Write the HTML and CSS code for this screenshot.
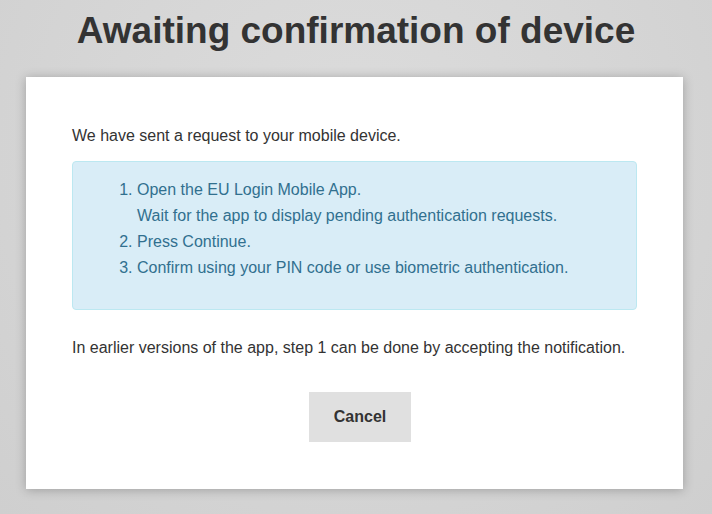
FILE: index.html
```html
<!DOCTYPE html>
<html lang="en">
<head>
<meta charset="utf-8">
<title>Awaiting confirmation of device</title>
<link rel="stylesheet" href="styles.css">
</head>
<body>
<main class="page">
  <h1 class="title">Awaiting confirmation of device</h1>
  <section class="card">
    <p class="text">We have sent a request to your mobile device.</p>
    <div class="alert">
      <ol class="steps">
        <li>Open the EU Login Mobile App.<br>Wait for the app to display pending authentication requests.</li>
        <li>Press Continue.</li>
        <li>Confirm using your PIN code or use biometric authentication.</li>
      </ol>
    </div>
    <p class="text note">In earlier versions of the app, step 1 can be done by accepting the notification.</p>
    <div class="actions">
      <button class="btn" type="button">Cancel</button>
    </div>
  </section>
</main>
</body>
</html>
```

FILE: styles.css
```css
html, body {
  margin: 0;
  padding: 0;
  height: 100%;
}
body {
  background: radial-gradient(ellipse at 50% 30%, #dcdcdc 0%, #d6d6d6 50%, #cfcfcf 100%);
  font-family: "Liberation Sans", Arial, sans-serif;
  color: #333;
}
.page {
  display: flex;
  flex-direction: column;
  align-items: center;
}
.title {
  margin: 0;
  padding-top: 8px;
  height: 69px;
  font-size: 37px;
  line-height: 46px;
  font-weight: bold;
  color: #333;
  text-align: center;
}
.card {
  width: 565px;
  margin-left: -3px;
  padding: 46px 46px 47px;
  background: #fff;
  box-shadow: 0 1px 10px rgba(0, 0, 0, 0.25);
}
.text {
  margin: 0;
  font-size: 16px;
  line-height: 26px;
}
.alert {
  margin-top: 12px;
  padding: 15px 15px 0;
  background: #d9edf7;
  border: 1px solid #bce8f1;
  border-radius: 4px;
  color: #31708f;
}
.steps {
  margin: 0 0 28px;
  padding-left: 49px;
  font-size: 16px;
  line-height: 26px;
}
.note {
  margin-top: 25px;
}
.actions {
  display: flex;
  justify-content: center;
  margin-top: 31px;
  padding-left: 11px;
}
.btn {
  width: 102px;
  height: 50px;
  border: 0;
  background: #e0e0e0;
  font-family: "Liberation Sans", Arial, sans-serif;
  font-size: 16px;
  font-weight: bold;
  color: #333;
}
```
